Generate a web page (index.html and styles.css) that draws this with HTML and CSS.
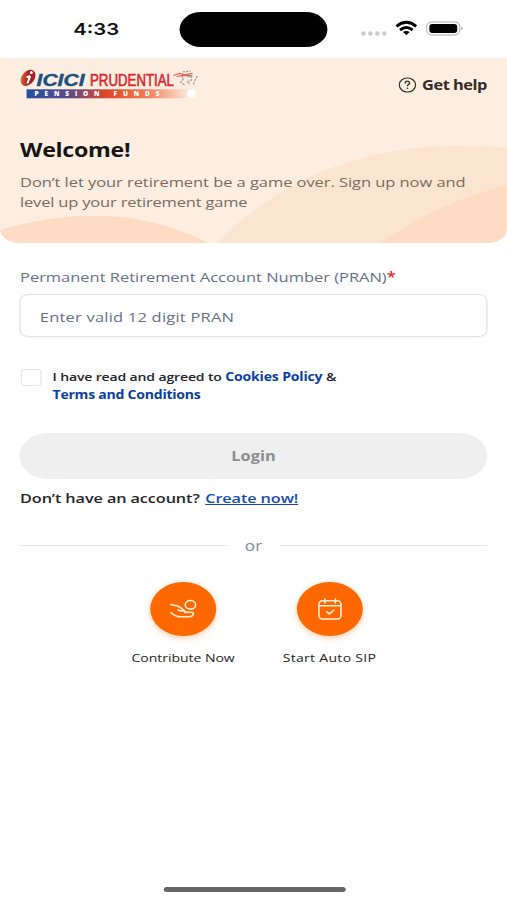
FILE: index.html
```html
<!DOCTYPE html>
<html lang="en">
<head>
<meta charset="utf-8">
<title>ICICI Prudential Pension Funds</title>
<link rel="stylesheet" href="styles.css">
</head>
<body>
<div class="screen">
  <div class="status">
    <div class="time">4:33</div>
    <div class="island"></div>
    <svg class="indicators" viewBox="0 0 104 20" preserveAspectRatio="none">
      <g fill="#cbcbcb"><circle cx="3" cy="14.5" r="2.2"/><circle cx="10" cy="14.5" r="2.2"/><circle cx="17" cy="14.5" r="2.2"/><circle cx="24" cy="14.5" r="2.2"/></g>
      <g fill="none" stroke="#000" stroke-width="2.9"><path d="M36.1 7.3Q46 -.7 55.9 7.3"/><path d="M39.7 11Q46 6 52.3 11"/></g>
      <path d="M42.6 13Q46 10.8 49.4 13L46 16Z"/>
      <rect x="66.5" y="3" width="33" height="13" rx="4.5" fill="none" stroke="#aaa"/>
      <rect x="69" y="5" width="28" height="9" rx="3"/>
      <path d="M101.2 7.5q2.5 2 0 4z" fill="#888"/>
    </svg>
  </div>
  <header class="hero">
    <svg class="waves" viewBox="0 0 507 185" preserveAspectRatio="none">
      <path d="M216 185C280 122 360 88 455 88Q485 88 507 90V185Z" fill="#fce5d0"/>
      <path d="M380 185C420 158 457 140 507 127V185Z" fill="#fddcc3"/>
      <path d="M0 172C60 154 138 148 208 185H0Z" fill="#fddcc3"/>
    </svg>
    <div class="topbar">
      <svg class="logo" viewBox="0 0 180 32" preserveAspectRatio="none">
        <defs>
          <linearGradient id="strip"><stop offset="0" stop-color="#2450a2"/><stop offset=".25" stop-color="#5d4b89"/><stop offset=".48" stop-color="#df4928"/><stop offset=".7" stop-color="#ee7b50"/><stop offset="1" stop-color="#fff9f3"/></linearGradient>
          <linearGradient id="flame" x1="1" y1="0" x2="0" y2="1"><stop offset="0" stop-color="#a51d2d"/><stop offset=".5" stop-color="#a8232a"/><stop offset="1" stop-color="#f18a26"/></linearGradient>
        </defs>
        <ellipse cx="8.5" cy="8.8" rx="6.3" ry="9" transform="rotate(38 8.5 8.8)" fill="url(#flame)"/>
        <path d="M10.6 6.8 7.9 14.5M7 8.3l3.6-1.5" fill="none" stroke="#fff" stroke-width="2"/><circle cx="11.8" cy="3.6" r="1.5" fill="#fff"/>
        <text class="brand-a" x="17" y="16.9" textLength="48" lengthAdjust="spacingAndGlyphs">ICICI</text>
        <text class="brand-b" x="70.5" y="16.9" textLength="84" lengthAdjust="spacingAndGlyphs">PRUDENTIAL</text>
        <rect x="7" y="20.3" width="169" height="9" fill="url(#strip)"/>
        <rect x="168" y="21" width="7" height="7.5" rx="1" fill="#fff"/>
        <text class="brand-c" x="15" y="27.2" textLength="65">PENSION</text>
        <text class="brand-c" x="94" y="27.2" textLength="46">FUNDS</text>
        <g fill="none" stroke-width="1.2"><path stroke="#e26058" d="M154 6.5l6-2 5 1.3 8-1.5M157 7.5l7-1.2 9 .5"/><path stroke="#a59a90" stroke-dasharray="2.5 1" d="M162 7l2 3-3 3 4 3M168 8l4-1 0 4-4 2 2 2M178 7l-3 5-1 4M163 3l8-1"/></g>
      </svg>
      <a class="help">
        <svg viewBox="0 0 18 16" preserveAspectRatio="none"><ellipse cx="9" cy="8" rx="8" ry="7" fill="none" stroke="#342b26" stroke-width="1.2"/><path d="M6.8 6.4C6.8 3.4 11.3 3.6 11.1 6.1 11 7.5 9 7.6 9 9.2" fill="none" stroke="#342b26" stroke-width="1.3"/><circle cx="9" cy="11.2" r=".8" fill="#342b26"/></svg>
        <span>Get help</span>
      </a>
    </div>
    <h1>Welcome!</h1>
    <p>Don’t let your retirement be a game over. Sign up now and<br><span class="second">level up your retirement game</span></p>
  </header>
  <main>
    <label class="label">Permanent Retirement Account Number (PRAN)<b>*</b></label>
    <div class="field">Enter valid 12 digit PRAN</div>
    <div class="consent">
      <span class="check"></span>
      <div><span class="agree">I have read and agreed to</span> <a class="cookies">Cookies Policy</a> &amp;<br><a class="terms">Terms and Conditions</a></div>
    </div>
    <div class="login">Login</div>
    <div class="signup"><span>Don’t have an account?</span><a>Create now!</a></div>
    <div class="or"><span>or</span></div>
    <div class="actions">
      <div class="action">
        <div class="disc"><svg viewBox="0 0 66 54" preserveAspectRatio="none"><ellipse cx="40.2" cy="22.8" rx="5.2" ry="4.3"/><path d="M20.7 22.5L26 23.8Q28.5 24.3 30.5 26L34.5 28.8Q31.5 29.6 27.5 28M20.7 30.8Q26 34.8 30 34.8H38.5Q42.8 34.6 43.2 31.6Q43 30 39.5 30.2L34.5 30.4"/></svg></div>
        <span>Contribute Now</span>
      </div>
      <div class="action">
        <div class="disc"><svg viewBox="0 0 66 54" preserveAspectRatio="none"><rect x="22.1" y="18.7" width="22" height="18.3" rx="3.5"/><path d="M22 23.8h22M28 17v4M38.5 17v4M30 29.8l2.6 2 4.4-3.8"/></svg></div>
        <span class="sip">Start Auto SIP</span>
      </div>
    </div>
  </main>
  <div class="home"></div>
</div>
</body>
</html>
```
FILE: styles.css
```css
* { box-sizing: border-box; }
body { margin: 0; background: #fff; overflow: hidden; }
/* Narrow layout widened to fill the window */
.screen {
  width: 415px; height: 900px;
  display: flex; flex-direction: column;
  transform: scaleX(1.22169); transform-origin: 0 0;
  font-family: "Open Sans", sans-serif; color: #242426;
}
.status { height: 58px; flex: none; display: flex; padding-top: 12px; }
.time { width: 147.3px; padding-left: 60px; font: 600 16.6px/35px Inter, sans-serif; color: #111; }
.island { width: 121px; height: 35px; border-radius: 18px; background: #000; }
.indicators { width: 85px; height: 20px; margin: 7px 0 0 26.3px; }
.hero {
  position: relative; height: 185px; flex: none; overflow: hidden;
  padding: 11px 16.4px 0; background: #fdeee1; border-radius: 0 0 15px 15px;
}
.waves { position: absolute; inset: 0; width: 100%; height: 100%; }
.topbar { position: relative; display: flex; justify-content: space-between; height: 32px; }
.logo { width: 147.3px; height: 32px; overflow: visible; }
.brand-a { font: italic 700 17px "Liberation Sans", sans-serif; fill: #1c5182; stroke: #1c5182; stroke-width: .4; }
.brand-b { font: 400 17px "Liberation Sans", sans-serif; fill: #da272f; stroke: #da272f; stroke-width: .6; }
.brand-c { font: 800 6.5px "Open Sans", sans-serif; fill: #fff; }
.help { display: flex; gap: 4.3px; font-size: 13.4px; letter-spacing: -.38px; font-weight: 700; line-height: 32px; color: #342b26; }
.help svg { width: 15px; height: 16px; margin-top: 8px; }
h1 { position: relative; margin: 35px 0 0; font-size: 19px; line-height: 28px; letter-spacing: -.25px; font-weight: 700; color: #161616; }
.hero p { position: relative; margin: 8px 0 0; font-size: 13.5px; letter-spacing: -.05px; line-height: 20px; color: #7a6a60; white-space: nowrap; }
.hero .second { letter-spacing: -.15px; }
main { padding: 23px 16.4px 0; flex: 1; }
.label { display: block; font-size: 13.5px; line-height: 22px; letter-spacing: -.02px; color: #667085; white-space: nowrap; }
.label b { color: #ed1c24; font-weight: 600; }
.field { height: 43px; margin-top: 6px; padding-left: 15.2px; border: 1px solid #e2e4e7; border-radius: 7px; font-size: 13.5px; letter-spacing: .17px; line-height: 44px; color: #667085; box-shadow: 0 1px 2px #1018280a; }
.consent { display: flex; gap: 9px; margin: 31px 0 0 1px; font-size: 11.5px; line-height: 17.5px; letter-spacing: -.13px; font-weight: 600; }
.consent > div { margin-left: -.4px; }
.check { width: 17px; height: 17px; border: 1px solid #e4e6e9; border-radius: 3px; margin-top: 1px; }
.consent a { color: #0b3da5; font-weight: 700; }
.consent .cookies { letter-spacing: -.14px; }
.consent .terms { letter-spacing: -.2px; }
.login { height: 46px; margin-top: 30px; border-radius: 23px; background: #efefef; color: #8b8d91; text-align: center; font-size: 13.4px; line-height: 47px; font-weight: 700; }
.signup { display: flex; gap: 4.5px; margin-top: 8px; font-size: 13.3px; letter-spacing: -.08px; line-height: 22px; font-weight: 600; }
.signup a { color: #174ab0; text-decoration: underline; letter-spacing: -.08px; }
.or { display: flex; align-items: center; gap: 14px; margin-top: 25.5px; font-size: 14px; line-height: 22px; color: #858991; }
.or::before, .or::after { content: ""; flex: 1; height: 1px; background: #e6e7e9; }
.actions { display: flex; justify-content: center; gap: 22.8px; margin: 25px -4.6px 0 0; }
.action { width: 97px; display: flex; flex-direction: column; align-items: center; font-size: 11.5px; line-height: 20px; font-weight: 500; white-space: nowrap; letter-spacing: -.04px; }
.sip { letter-spacing: .22px; }
.disc { width: 54px; height: 54px; border-radius: 50%; background: #ff6800; box-shadow: 0 2px 6px #ff680055; margin-bottom: 12px; }
.disc svg { display: block; width: 54px; height: 54px; fill: none; stroke: #fff1dc; stroke-width: 1.6; stroke-linecap: round; stroke-linejoin: round; }
.home { width: 149px; height: 5px; margin: 0 0 8px 133.5px; border-radius: 3px; background: #666; }
```
